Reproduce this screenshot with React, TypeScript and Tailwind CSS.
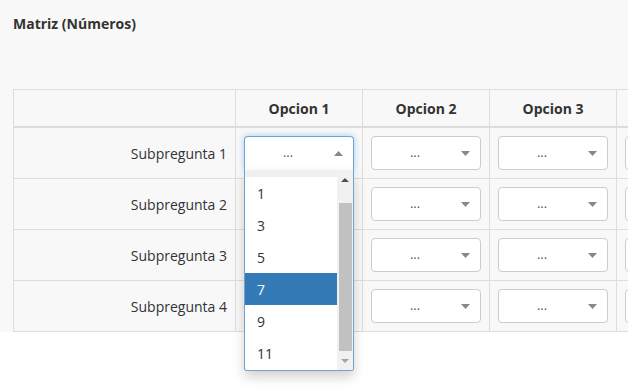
import React from "react";

const Arrow = ({ up = false }: { up?: boolean }) => (
  <svg width="9" height="5" viewBox="0 0 9 5" className="block">
    {up ? <path d="M0 5 L4.5 0 L9 5 Z" fill="#888" /> : <path d="M0 0 L4.5 5 L9 0 Z" fill="#888" />}
  </svg>
);

const Select = () => (
  <div className="h-[34px] w-[110px] rounded-[4px] border border-[#ccc] bg-white flex items-center relative">
    <span className="flex-1 text-center text-[13px] text-[#555] pl-[8px] leading-none pb-[2px]">...</span>
    <span className="w-[30px] flex justify-center">
      <Arrow />
    </span>
  </div>
);

const OpenSelect = () => (
  <div className="relative w-[110px]">
    <div className="h-[34px] w-[110px] rounded-t-[4px] border border-b-0 border-[#6fa3d6] bg-white flex items-center shadow-[0_0_6px_rgba(102,175,233,0.6)]">
      <span className="flex-1 text-center text-[13px] text-[#555] pl-[8px] leading-none pb-[2px]">...</span>
      <span className="w-[30px] flex justify-center">
        <Arrow up />
      </span>
    </div>
    <div className="absolute left-0 top-[34px] z-10 w-[110px] h-[201px] border border-t-0 border-[#6fa3d6] rounded-b-[3px] bg-white shadow-[0_6px_12px_rgba(0,0,0,0.18)] flex overflow-hidden">
      <div className="flex-1 flex flex-col">
        <div className="h-[7px] bg-[#f0f0f0]" />
        {["1", "3", "5", "7", "9", "11"].map((n) => (
          <div
            key={n}
            className={
              "h-[32px] flex items-center pl-[12px] text-[14px] " +
              (n === "7" ? "bg-[#337ab7] text-white" : "text-[#333]")
            }
          >
            {n}
          </div>
        ))}
      </div>
      <div className="w-[16px] bg-[#f1f1f1] flex flex-col items-center">
        <div className="h-[17px] flex items-center justify-center pt-[2px]">
          <svg width="8" height="4" viewBox="0 0 8 4"><path d="M0 4 L4 0 L8 4 Z" fill="#505050" /></svg>
        </div>
        <div className="h-[16px]" />
        <div className="w-[13px] h-[148px] bg-[#c1c1c1]" />
        <div className="flex-1 flex items-center justify-center">
          <svg width="8" height="4" viewBox="0 0 8 4"><path d="M0 0 L4 4 L8 0 Z" fill="#a3a3a3" /></svg>
        </div>
      </div>
    </div>
  </div>
);

export default function App() {
  const rows = ["Subpregunta 1", "Subpregunta 2", "Subpregunta 3", "Subpregunta 4"];
  const cols = ["Opcion 1", "Opcion 2", "Opcion 3", "Opcion 4"];
  return (
    <div className="min-h-screen bg-white font-['Open_Sans',sans-serif] text-[#333] overflow-x-clip">
      <div className="bg-[#f8f8f8] h-[332px] pt-[14px] pl-[13px] overflow-x-clip">
        <div className="text-[14px] font-bold leading-[20px]">Matriz (Números)</div>
        <div className="mt-[55px] w-[800px] border-l border-t border-[#ddd] grid grid-cols-[222px_127px_127px_127px_127px]">
          <div className="h-[38px] border-r border-b-2 border-[#ddd]" />
          {cols.map((c) => (
            <div
              key={c}
              className="h-[38px] border-r border-b-2 border-[#ddd] flex items-center justify-center text-[14px] font-bold"
            >
              {c}
            </div>
          ))}
          {rows.map((r, ri) => (
            <React.Fragment key={r}>
              <div className="h-[51px] border-r border-b border-[#ddd] flex items-center justify-end pr-[8px] text-[14px]">
                {r}
              </div>
              {cols.map((c, ci) => (
                <div key={c} className="h-[51px] border-r border-b border-[#ddd] pl-[8px] pt-[8px]">
                  {ri === 0 && ci === 0 ? <OpenSelect /> : <Select />}
                </div>
              ))}
            </React.Fragment>
          ))}
        </div>
      </div>
    </div>
  );
}
